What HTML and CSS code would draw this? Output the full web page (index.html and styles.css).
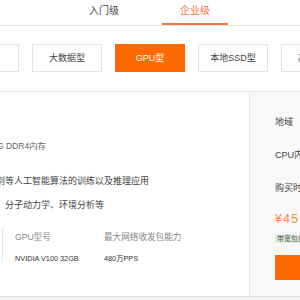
FILE: index.html
```html
<!DOCTYPE html>
<html lang="zh-CN">
<head>
<meta charset="UTF-8" />
<meta name="viewport" content="width=device-width, initial-scale=1" />
<title>GPU型</title>
<link rel="stylesheet" href="styles.css">
</head>
<body>

<div class="tabs">
  <div class="tab">入门级</div>
  <div class="tab active">企业级</div>
</div>

<div class="types">
  <div class="type">通用型</div>
  <div class="type">大数据型</div>
  <div class="type active">GPU型</div>
  <div class="type">本地SSD型</div>
  <div class="type">高主频型</div>
</div>

<div class="panel">
  <div class="main">
    <div class="mem">G DDR4内存</div>
    <div class="desc">
      <div class="line">别等人工智能算法的训练以及推理应用</div>
      <div class="line">、分子动力学、环境分析等</div>
    </div>
    <div class="specs">
      <div class="spec first">
        <div class="label">GPU型号</div>
        <div class="value">NVIDIA V100 32GB</div>
      </div>
      <div class="spec">
        <div class="label">最大网络收发包能力</div>
        <div class="value">480万PPS</div>
      </div>
    </div>
  </div>
  <div class="side">
    <div class="row">地域</div>
    <div class="row">CPU内存</div>
    <div class="row">购买时长</div>
    <div class="price">¥4500</div>
    <div class="tag">带宽包优惠</div>
    <div class="buy">立即购买</div>
  </div>
</div>

</body>
</html>
```

FILE: styles.css
```css
body {
  margin: 0;
  width: 300px;
  height: 300px;
  overflow: hidden;
  background: #f5f5f5;
  font-family: "Liberation Sans", "Noto Sans CJK SC", sans-serif;
  color: #333;
  white-space: nowrap;
}
.tabs {
  display: flex;
  gap: 25px;
  padding-left: 71px;
  height: 25px;
  background: #fff;
  border-bottom: 1px solid #e6e6e6;
}
.tab {
  width: 66px;
  text-align: center;
  font-size: 10px;
  line-height: 21px;
  color: #444;
}
.tab.active {
  color: #f47a35;
  box-shadow: inset 0 -2px 0 #f47a35;
}
.types {
  display: flex;
  gap: 13px;
  padding: 18px 0 19px;
  margin-left: -51px;
  background: #fff;
}
.type {
  flex: none;
  width: 70px;
  height: 28px;
  box-sizing: border-box;
  border: 1px solid #e3e3e3;
  background: #fff;
  font-size: 9px;
  line-height: 26px;
  text-align: center;
  color: #444;
}
.type.active {
  background: #ff6a00;
  border-color: #ff6a00;
  color: #fff;
}
.panel {
  display: flex;
  height: 204px;
  border-top: 1px solid #e6e6e6;
  border-bottom: 1px solid #e3e3e3;
  background: #fff;
}
.main {
  width: 249px;
  padding-top: 48px;
  border-right: 1px solid #e6e6e6;
}
.mem {
  margin-left: -3px;
  font-size: 8.5px;
  line-height: 12px;
  color: #666;
}
.desc {
  margin-top: 17px;
  margin-left: -4px;
  font-size: 9px;
  line-height: 24px;
  color: #444;
}
.specs {
  display: flex;
  margin: 11px 0 0 2px;
  height: 34px;
  padding: 3px 0 0 12px;
  box-sizing: border-box;
  border-left: 1px solid #e6e6e6;
}
.spec.first {
  width: 89px;
}
.label {
  font-size: 8.6px;
  line-height: 12px;
  color: #888;
}
.value {
  margin-top: 10px;
  font-size: 7.3px;
  line-height: 12px;
  color: #333;
}
.side {
  flex: 1;
  min-width: 0;
  padding: 14px 0 0 25px;
  background: #f8f8f8;
}
.row {
  font-size: 9px;
  line-height: 33px;
  color: #444;
}
.price {
  margin-top: 6px;
  font-size: 12px;
  line-height: 16px;
  letter-spacing: 1.5px;
  color: #f7873a;
}
.tag {
  display: inline-block;
  margin-top: 5px;
  padding: 0 2px;
  height: 9px;
  font-size: 7px;
  line-height: 9px;
  background: #e2efe2;
  color: #4d5d4d;
}
.buy {
  margin-top: 10px;
  width: 60px;
  height: 25px;
  background: #ff6a00;
  color: #fff;
  font-size: 9px;
  line-height: 25px;
  padding-left: 30px;
}
```
